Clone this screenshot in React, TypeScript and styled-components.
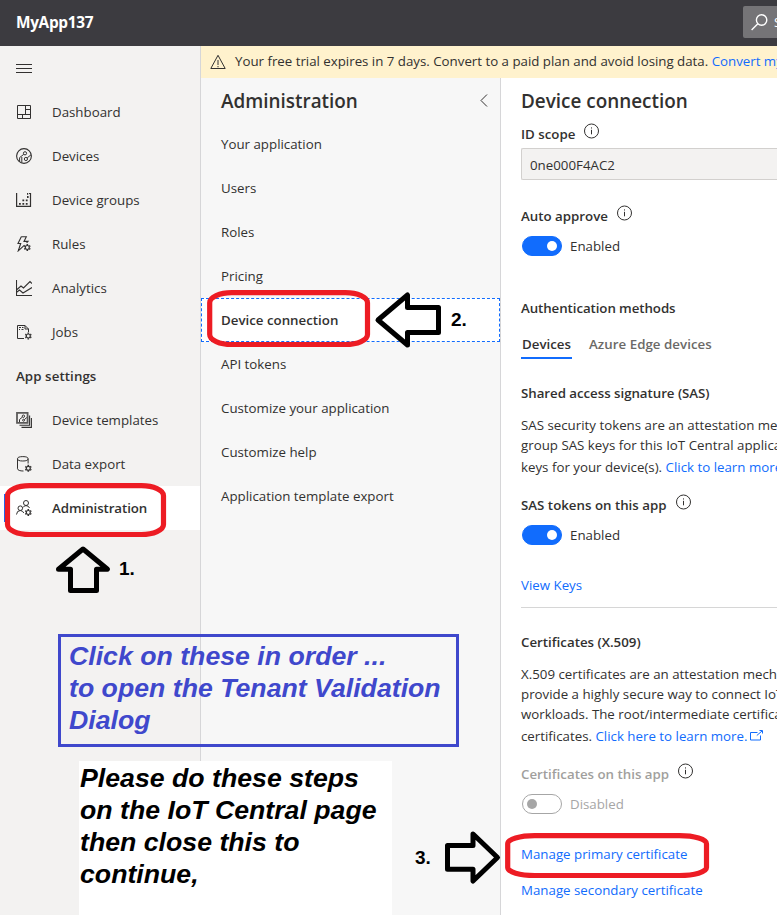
import React from "react";
import styled, { createGlobalStyle, css } from "styled-components";

const ink = "#323130";
const blue = "#116cfd";
const line = "#d6d6d8";

const GlobalStyle = createGlobalStyle`
  * { box-sizing: border-box; }
  html, body { margin: 0; height: 100%; overflow: hidden; }
  body {
    font-family: "Open Sans", "Noto Sans", sans-serif;
    font-size: 13.3px;
    color: ${ink};
    background: #fff;
  }
`;

const Page = styled.div`
  position: relative;
  width: 777px;
  height: 915px;
  overflow: hidden;
  display: flex;
  flex-direction: column;
`;

const Header = styled.header`
  flex: none;
  height: 46px;
  background: #3c3b40;
  color: #fff;
  display: flex;
  align-items: center;
  justify-content: space-between;
  padding-left: 16px;
  overflow: hidden;
`;

const AppName = styled.div`
  font-size: 15.4px;
  font-weight: 700;
  line-height: 20px;
  letter-spacing: -0.33px;
`;

const SearchBox = styled.div`
  flex: none;
  width: 34px;
  height: 32px;
  padding-left: 8px;
  margin-bottom: 2px;
  border-radius: 2px 0 0 2px;
  background: #757477;
  display: flex;
  align-items: center;
  gap: 6px;
  overflow: hidden;
  white-space: nowrap;
  svg { flex: none; }
`;

const Body = styled.div`
  flex: 1;
  min-height: 0;
  display: flex;
`;

const Sidebar = styled.nav`
  flex: none;
  width: 201px;
  background: #f3f2f1;
  border-right: 1px solid ${line};
`;

const NavRow = styled.div<{ $active?: boolean }>`
  height: 44px;
  padding-left: 16px;
  display: flex;
  align-items: center;
  gap: 20px;
  white-space: nowrap;
  svg { flex: none; display: block; }
  ${(p) =>
    p.$active &&
    css`
      background: linear-gradient(${blue}, ${blue}) 4px 8px / 3px 28px no-repeat #fff;
      font-weight: 600;
    `}
`;

const NavHeading = styled(NavRow)`
  font-weight: 600;
`;

const Text = styled.span<{ $track?: number }>`
  line-height: 20px;
  letter-spacing: ${(p) => p.$track ?? 0}px;
`;

const Main = styled.div`
  flex: 1;
  min-width: 0;
  display: flex;
  flex-direction: column;
`;

const Banner = styled.div`
  flex: none;
  height: 32px;
  padding: 0 0 2px 9px;
  background: #fff2cd;
  display: flex;
  align-items: center;
  white-space: nowrap;
  overflow: hidden;
  svg { flex: none; margin: 2px 9px 0 0; }
`;

const Link = styled.a`
  color: ${blue};
`;

const Columns = styled.div`
  flex: 1;
  min-height: 0;
  display: flex;
`;

const SubPanel = styled.section`
  flex: none;
  width: 300px;
  background: #f7f7f7;
  border-right: 1px solid ${line};
`;

const SubHeader = styled.div`
  height: 44px;
  padding: 2px 12px 0 20px;
  display: flex;
  align-items: center;
  justify-content: space-between;
  svg { margin-bottom: 2px; }
`;

const Title = styled.h2`
  margin: 0;
  font-size: 18.9px;
  font-weight: 600;
  line-height: 24px;
  white-space: nowrap;
`;

const SubItem = styled.div<{ $active?: boolean }>`
  height: 44px;
  padding-left: 20px;
  display: flex;
  align-items: center;
  white-space: nowrap;
  ${(p) =>
    p.$active &&
    css`
      background: #fff;
      border: 1px dashed ${blue};
      padding-left: 19px;
      font-weight: 600;
    `}
`;

const Content = styled.section`
  flex: 1;
  min-width: 0;
  padding: 11px 0 0 20px;
  background: #fff;
  overflow: hidden;
  white-space: nowrap;
`;

const Row = styled.div<{ $top: number; $bold?: boolean; $color?: string }>`
  height: 20px;
  margin-top: ${(p) => p.$top}px;
  display: flex;
  align-items: center;
  font-weight: ${(p) => (p.$bold ? 600 : 400)};
  color: ${(p) => p.$color ?? ink};
  svg { flex: none; margin: -6px 0 0 9px; }
`;

const Field = styled.div`
  height: 32px;
  margin-top: 4px;
  padding: 2px 0 0 8px;
  background: #f3f2f1;
  border: 1px solid #d2d0ce;
  border-right: 0;
  border-radius: 2px 0 0 2px;
  display: flex;
  align-items: center;
`;

const Switch = styled.span<{ $on?: boolean }>`
  width: 40px;
  height: 20px;
  margin: 0 8px 0 1px;
  padding: 0 4px;
  border-radius: 10px;
  border: 1px solid ${(p) => (p.$on ? blue : "#a6a6a6")};
  background: ${(p) => (p.$on ? blue : "#fff")};
  display: flex;
  align-items: center;
  justify-content: ${(p) => (p.$on ? "flex-end" : "flex-start")};
  &::after {
    content: "";
    width: 10px;
    height: 10px;
    border-radius: 50%;
    background: ${(p) => (p.$on ? "#fff" : "#a6a6a6")};
  }
`;

const Tabs = styled.div`
  height: 31px;
  margin-top: 10px;
  display: flex;
  gap: 16px;
  font-weight: 600;
`;

const Tab = styled.div<{ $active?: boolean }>`
  padding: 6px 1px 0;
  color: ${(p) => (p.$active ? ink : "#6b6967")};
  border-bottom: 2px solid ${(p) => (p.$active ? blue : "transparent")};
`;

const Paragraph = styled.div<{ $top: number }>`
  margin-top: ${(p) => p.$top}px;
`;

const TextLine = styled.div<{ $last?: boolean }>`
  height: ${(p) => (p.$last ? 24 : 20)}px;
  line-height: ${(p) => (p.$last ? 24 : 20)}px;
  svg { margin-left: 2px; vertical-align: 0; }
`;

const Rule = styled.hr`
  height: 1px;
  margin: 12px 0 0;
  border: 0;
  background: #d6d6d6;
`;

const Overlay = styled.svg`
  position: absolute;
  inset: 0;
  pointer-events: none;
`;

const StepNumber = styled.div<{ $x: number; $y: number }>`
  position: absolute;
  left: ${(p) => p.$x}px;
  top: ${(p) => p.$y}px;
  font: 700 19px/22px "Liberation Sans", Arial, sans-serif;
  color: #000;
`;

const Note = styled.div`
  position: absolute;
  font: italic 700 26.7px/32px "Liberation Sans", Arial, sans-serif;
  white-space: nowrap;
`;

const BlueNote = styled(Note)`
  left: 58px;
  top: 634px;
  width: 401px;
  height: 113px;
  padding: 3px 8px;
  border: 3px solid #3f48cc;
  color: #3f48cc;
`;

const WhiteNote = styled(Note)`
  left: 79px;
  top: 761px;
  width: 313px;
  height: 154px;
  padding: 1px;
  background: #fff;
  color: #000;
`;

const Icon = ({ children, size = 16 }: { children: React.ReactNode; size?: number }) => (
  <svg width={size} height={size} viewBox="0 0 16 16" fill="none" stroke={ink} strokeWidth="1">
    {children}
  </svg>
);

const Gear = ({ x, y }: { x: number; y: number }) => (
  <g transform={`translate(${x} ${y})`}>
    <circle r="2" strokeWidth="1.2" />
    <path
      d="M0-3.5V-2.3M0 2.3V3.5M-3-1.75L-2-1.15M2 1.15L3 1.75M-3 1.75L-2 1.15M2-1.15L3-1.75"
      strokeWidth="1.6"
    />
  </g>
);

const icons = {
  menu: <Icon><path d="M0 4.5H16M0 8.5H16M0 12.5H16" /></Icon>,
  dashboard: <Icon><path d="M1.5 1.5H14.5V14.5H1.5ZM9.5 1.5V10.5M1.5 10.5H14.5M9.5 5.5H14.5M6.5 10.5V14.5" /></Icon>,
  devices: (
    <Icon>
      <circle cx="8" cy="8" r="7.4" strokeWidth="1.1" />
      <circle cx="9" cy="5.3" r="1.6" />
      <circle cx="9.9" cy="11" r="1.6" />
      <path d="M7.7 6.4L3.6 9.6V13.2M11.2 9.9L15 6.8M5.8 9V14.5" />
    </Icon>
  ),
  groups: (
    <Icon>
      <path d="M.6 1V14.4H14.5V1M13 1.5H15" strokeWidth="1.2" />
      <path d="M3 11.9H4.8M6.4 11.9H8.2M9.8 11.9H11.6M6.4 8.4H8.2M9.8 8.4H11.6M11 5H12.6M11 1.8H12.2" strokeWidth="1.8" />
    </Icon>
  ),
  rules: (
    <Icon>
      <path d="M5.3.8H10.3L8 5.4H12L10.6 7M5.3.8L2 7.5H4.7L2.3 14.8L8.5 9.1" strokeWidth="1.1" />
      <Gear x={11.3} y={11.5} />
    </Icon>
  ),
  analytics: <Icon><path d="M.5 0V15.5H16M1 9.5L5 6L7.5 8L14 1.5L16 3.5M1 12L3.5 10L7 13L16 7.5" strokeWidth="1.1" /></Icon>,
  jobs: (
    <Icon>
      <path d="M8 14.5H1.5V1.5H9L12.5 5V8M9 1.5V5H12.5M3 3.5H5M6 3.5H7.5M3 5.5H4M5.5 5.5H7.5" />
      <Gear x={12.3} y={12} />
    </Icon>
  ),
  templates: (
    <Icon>
      <path d="M1 .9H11.6V10.9H1Z" strokeWidth="1.8" stroke="#5c5b5a" />
      <path d="M3.5 13.3H13.6V3.5M5.5 15.4H15.4V6" strokeWidth="1.1" />
      <circle cx="7.4" cy="4.2" r="1.2" />
      <circle cx="7.6" cy="8.2" r="1" />
      <path d="M6.5 5L3.5 7.5V10M8.5 7.5L10.8 5.5" />
    </Icon>
  ),
  export: (
    <Icon>
      <ellipse cx="6.8" cy="2.8" rx="5.3" ry="2.2" />
      <path d="M1.5 2.8V12.8Q2 15 7.5 15M12.1 2.8V7.5" />
      <Gear x={12.3} y={12.3} />
    </Icon>
  ),
  admin: (
    <Icon>
      <circle cx="10" cy="3" r="2.5" />
      <circle cx="4.3" cy="8.2" r="2.3" />
      <path d="M.5 14.5Q.8 10.6 4.3 10.5Q6.8 10.7 7.8 13M7 7.5Q8.2 5.6 10 5.6Q12.7 5.7 13.5 8" />
      <Gear x={12.3} y={12.5} />
    </Icon>
  ),
};

const InfoIcon = () => (
  <Icon>
    <circle cx="7.5" cy="8" r="7" />
    <path d="M7.5 6.8V11.3M7.5 4.4V5.5" />
  </Icon>
);

const navItems: { icon?: keyof typeof icons; label: string; active?: boolean }[] = [
  { icon: "dashboard", label: "Dashboard" },
  { icon: "devices", label: "Devices" },
  { icon: "groups", label: "Device groups" },
  { icon: "rules", label: "Rules" },
  { icon: "analytics", label: "Analytics" },
  { icon: "jobs", label: "Jobs" },
  { label: "App settings" },
  { icon: "templates", label: "Device templates" },
  { icon: "export", label: "Data export" },
  { icon: "admin", label: "Administration", active: true },
];

const subItems: { label: string; active?: boolean }[] = [
  { label: "Your application" },
  { label: "Users" },
  { label: "Roles" },
  { label: "Pricing" },
  { label: "Device connection", active: true },
  { label: "API tokens" },
  { label: "Customize your application" },
  { label: "Customize help" },
  { label: "Application template export" },
];

export default function App() {
  return (
    <>
      <GlobalStyle />
      <Page>
        <Header>
          <AppName>MyApp137</AppName>
          <SearchBox>
            <svg width="17" height="17" viewBox="0 0 17 17" fill="none" stroke="#fff" strokeWidth="1.4">
              <circle cx="10.6" cy="6" r="5.2" />
              <path d="M6.8 9.8L.6 16" />
            </svg>
            <Text>Search</Text>
          </SearchBox>
        </Header>
        <Body>
          <Sidebar>
            <NavRow>{icons.menu}</NavRow>
            {navItems.map((n) =>
              n.icon ? (
                <NavRow key={n.label} $active={n.active}>
                  {icons[n.icon]}
                  <Text $track={n.active ? -0.08 : 0}>{n.label}</Text>
                </NavRow>
              ) : (
                <NavHeading key={n.label}>
                  <Text $track={0.08}>{n.label}</Text>
                </NavHeading>
              )
            )}
          </Sidebar>
          <Main>
            <Banner>
              <Icon>
                <path d="M8 1.3L15.2 14.5H.8ZM8 6V11M8 12V13.3" />
              </Icon>
              <Text $track={-0.01}>
                Your free trial expires in 7 days. Convert to a paid plan and avoid losing data.{" "}
                <Link>Convert my trial</Link>
              </Text>
            </Banner>
            <Columns>
              <SubPanel>
                <SubHeader>
                  <Title>Administration</Title>
                  <svg width="8" height="13" viewBox="0 0 8 13" fill="none" stroke={ink}>
                    <path d="M7 .5L1 6.5L7 12.5" />
                  </svg>
                </SubHeader>
                {subItems.map((s) => (
                  <SubItem key={s.label} $active={s.active}>
                    <Text>{s.label}</Text>
                  </SubItem>
                ))}
              </SubPanel>
              <Content>
                <Title>Device connection</Title>
                <Row $top={11} $bold>
                  <Text>ID scope</Text>
                  <InfoIcon />
                </Row>
                <Field>
                  <Text>0ne000F4AC2</Text>
                </Field>
                <Row $top={26} $bold>
                  <Text>Auto approve</Text>
                  <InfoIcon />
                </Row>
                <Row $top={10}>
                  <Switch $on />
                  <Text>Enabled</Text>
                </Row>
                <Row $top={42} $bold>
                  <Text $track={-0.08}>Authentication methods</Text>
                </Row>
                <Tabs>
                  <Tab $active>
                    <Text>Devices</Text>
                  </Tab>
                  <Tab>
                    <Text $track={0.04}>Azure Edge devices</Text>
                  </Tab>
                </Tabs>
                <Row $top={24} $bold>
                  <Text $track={-0.04}>Shared access signature (SAS)</Text>
                </Row>
                <Paragraph $top={12}>
                  <TextLine>SAS security tokens are an attestation mechanism.</TextLine>
                  <TextLine>group SAS keys for this IoT Central application</TextLine>
                  <TextLine $last>
                    keys for your device(s). <Link>Click to learn more.</Link>
                  </TextLine>
                </Paragraph>
                <Row $top={16} $bold>
                  <Text>SAS tokens on this app</Text>
                  <InfoIcon />
                </Row>
                <Row $top={10}>
                  <Switch $on />
                  <Text>Enabled</Text>
                </Row>
                <Row $top={30} $color={blue}>
                  <Text>View Keys</Text>
                </Row>
                <Rule />
                <Row $top={24} $bold>
                  <Text>Certificates (X.509)</Text>
                </Row>
                <Paragraph $top={12}>
                  <TextLine>X.509 certificates are an attestation mechanism</TextLine>
                  <TextLine>provide a highly secure way to connect IoT</TextLine>
                  <TextLine>workloads. The root/intermediate certificates</TextLine>
                  <TextLine $last>
                    certificates. <Link>Click here to learn more.</Link>
                    <svg width="15" height="11" viewBox="0 0 15 11" fill="none" stroke={blue}>
                      <path d="M8.5 2.5H1.5V10H11.5V5.5M7.8 5.5L13 1M10.5 .5H13.5V3.5" />
                    </svg>
                  </TextLine>
                </Paragraph>
                <Row $top={16} $bold $color="#a19f9d">
                  <Text>Certificates on this app</Text>
                  <InfoIcon />
                </Row>
                <Row $top={10} $color="#a6a6a6">
                  <Switch />
                  <Text>Disabled</Text>
                </Row>
                <Row $top={30} $color={blue}>
                  <Text>Manage primary certificate</Text>
                </Row>
                <Row $top={16} $color={blue}>
                  <Text>Manage secondary certificate</Text>
                </Row>
              </Content>
            </Columns>
          </Main>
        </Body>

        <BlueNote>
          Click on these in order ...
          <br />
          to open the Tenant Validation
          <br />
          Dialog
        </BlueNote>
        <WhiteNote>
          Please do these steps
          <br />
          on the IoT Central page
          <br />
          then close this to
          <br />
          continue,
        </WhiteNote>
        <StepNumber $x={119} $y={558}>1.</StepNumber>
        <StepNumber $x={451} $y={309}>2.</StepNumber>
        <StepNumber $x={415} $y={847}>3.</StepNumber>
        <Overlay width="777" height="915" fill="none">
          <g stroke="#ed1c24" strokeWidth="5.2">
            <rect x="7.5" y="485.7" width="156" height="48.8" rx="22" ry="10" />
            <rect x="209.7" y="292.7" width="157.8" height="51.8" rx="22" ry="10" />
            <rect x="507.7" y="835.7" width="198.8" height="39.8" rx="27" ry="8" />
          </g>
          <g stroke="#000" strokeWidth="5" strokeLinejoin="round">
            <path d="M83 549L107.5 569.2H96.5V590.5H70.5V569.2H58.5Z" />
            <path d="M378 320L407.5 295V307.5H438.5V332.5H407.5V345Z" />
            <path d="M447.5 845.5H473V834L497.5 857.5L473 881V869.3H447.5Z" />
          </g>
        </Overlay>
      </Page>
    </>
  );
}
